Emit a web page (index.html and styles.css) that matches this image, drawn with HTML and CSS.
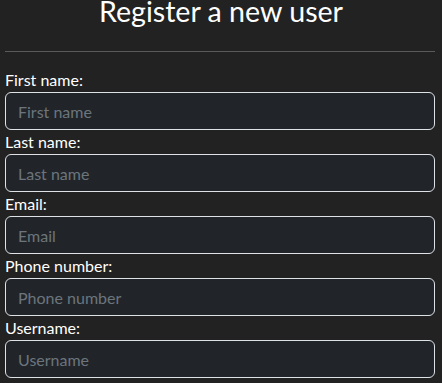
FILE: index.html
```html
<!DOCTYPE html>
<html>
<head>
<meta charset="utf-8">
<title>Register a new user</title>
<link rel="stylesheet" href="styles.css">
</head>
<body>
<main class="page">
  <h1 class="title">Register a new user</h1>
  <hr class="divider">
  <form class="form">
    <label class="field-label" for="first">First name:</label>
    <input class="field-input" id="first" type="text" placeholder="First name">
    <label class="field-label" for="last">Last name:</label>
    <input class="field-input" id="last" type="text" placeholder="Last name">
    <label class="field-label" for="email">Email:</label>
    <input class="field-input" id="email" type="email" placeholder="Email">
    <label class="field-label" for="phone">Phone number:</label>
    <input class="field-input" id="phone" type="tel" placeholder="Phone number">
    <label class="field-label" for="user">Username:</label>
    <input class="field-input" id="user" type="text" placeholder="Username">
  </form>
</main>
</body>
</html>
```
FILE: styles.css
```css
html, body {
  margin: 0;
  padding: 0;
  background: #222222;
  color: #ffffff;
  font-family: Lato, "Liberation Sans", sans-serif;
}

.page {
  display: flex;
  flex-direction: column;
  padding: 0 7px 0 5px;
}

.title {
  margin: 0;
  font-size: 28.6px;
  font-weight: 400;
  line-height: 23px;
  text-align: center;
  padding-left: 2px;
}

.divider {
  width: 100%;
  margin: 28px 0 16px;
  border: 0;
  border-top: 1px solid #5a5a5a;
  height: 0;
}

.form {
  display: flex;
  flex-direction: column;
}

.field-label {
  display: block;
  font-size: 16px;
  line-height: 24px;
}

.field-input {
  box-sizing: border-box;
  display: block;
  width: 100%;
  height: 38px;
  margin: 0;
  padding: 6px 12px;
  font-family: Lato, "Liberation Sans", sans-serif;
  font-size: 16px;
  line-height: 24px;
  color: #dee2e6;
  background: #212529;
  border: 1px solid #dee2e6;
  border-radius: 6px;
  outline: none;
}

.field-input::placeholder {
  color: #6c757d;
  opacity: 1;
}
```
